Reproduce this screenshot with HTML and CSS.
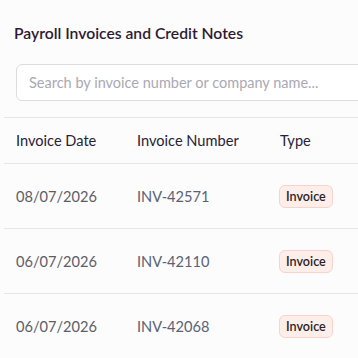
FILE: index.html
```html
<!DOCTYPE html>
<html lang="en">
<head>
    <meta charset="UTF-8">
    <meta name="viewport" content="width=device-width, initial-scale=1.0">
    <title>Payroll Invoices</title>
    <link rel="stylesheet" href="styles.css">
</head>
<body>

<div class="invoices">
    <h2 class="invoices-title">Payroll Invoices and Credit Notes</h2>

    <div class="search-box">
        <input type="text" class="search-input" placeholder="Search by invoice number or company name...">
    </div>

    <div class="invoice-table">
        <div class="table-row table-head">
            <div class="cell">Invoice Date</div>
            <div class="cell">Invoice Number</div>
            <div class="cell">Type</div>
        </div>
        <div class="table-row">
            <div class="cell cell-date">08/07/2026</div>
            <div class="cell cell-number">INV-42571</div>
            <div class="cell"><span class="badge">Invoice</span></div>
        </div>
        <div class="table-row">
            <div class="cell cell-date">06/07/2026</div>
            <div class="cell cell-number">INV-42110</div>
            <div class="cell"><span class="badge">Invoice</span></div>
        </div>
        <div class="table-row">
            <div class="cell cell-date">06/07/2026</div>
            <div class="cell cell-number">INV-42068</div>
            <div class="cell"><span class="badge">Invoice</span></div>
        </div>
    </div>
</div>

</body>
</html>
```

FILE: styles.css
```css
body {
    margin: 0;
    padding: 0;
    font-family: 'Lato', 'Noto Sans', sans-serif;
    background-color: #fcfcfd;
    overflow: hidden;
}
.invoices {
    width: 420px;
}
.invoices-title {
    margin: 0;
    padding: 24px 0 0 14px;
    font-size: 15.7px;
    font-weight: 600;
    line-height: 18px;
    color: #2e1a30;
}
.search-box {
    padding: 22px 0 0 16px;
}
.search-input {
    display: block;
    width: 380px;
    height: 37px;
    box-sizing: border-box;
    padding: 0 12px;
    border: 1px solid #dcdcdf;
    border-radius: 6px;
    background-color: #fff;
    font-family: inherit;
    font-size: 14.5px;
    color: #333;
}
.search-input::placeholder {
    color: #a9a9b3;
}
.invoice-table {
    margin: 16px 0 0 4px;
    border-top: 1px solid #e6e6e9;
}
.table-row {
    display: grid;
    grid-template-columns: 121px 143px 1fr;
    align-items: center;
    box-sizing: border-box;
    height: 65px;
    border-bottom: 1px solid #e6e6e9;
    font-size: 14.6px;
}
.table-head {
    height: 46px;
    color: #272233;
}
.cell {
    padding-left: 12px;
}
.cell-date {
    color: #5e5c66;
}
.cell-number {
    color: #5a6274;
}
.badge {
    display: inline-block;
    padding: 4px 6px;
    margin-left: -1px;
    border: 1px solid #f8d3cb;
    border-radius: 6px;
    background-color: #fdeeea;
    color: #2c1f26;
    font-size: 12.6px;
    font-weight: 600;
    line-height: 13px;
}
```
